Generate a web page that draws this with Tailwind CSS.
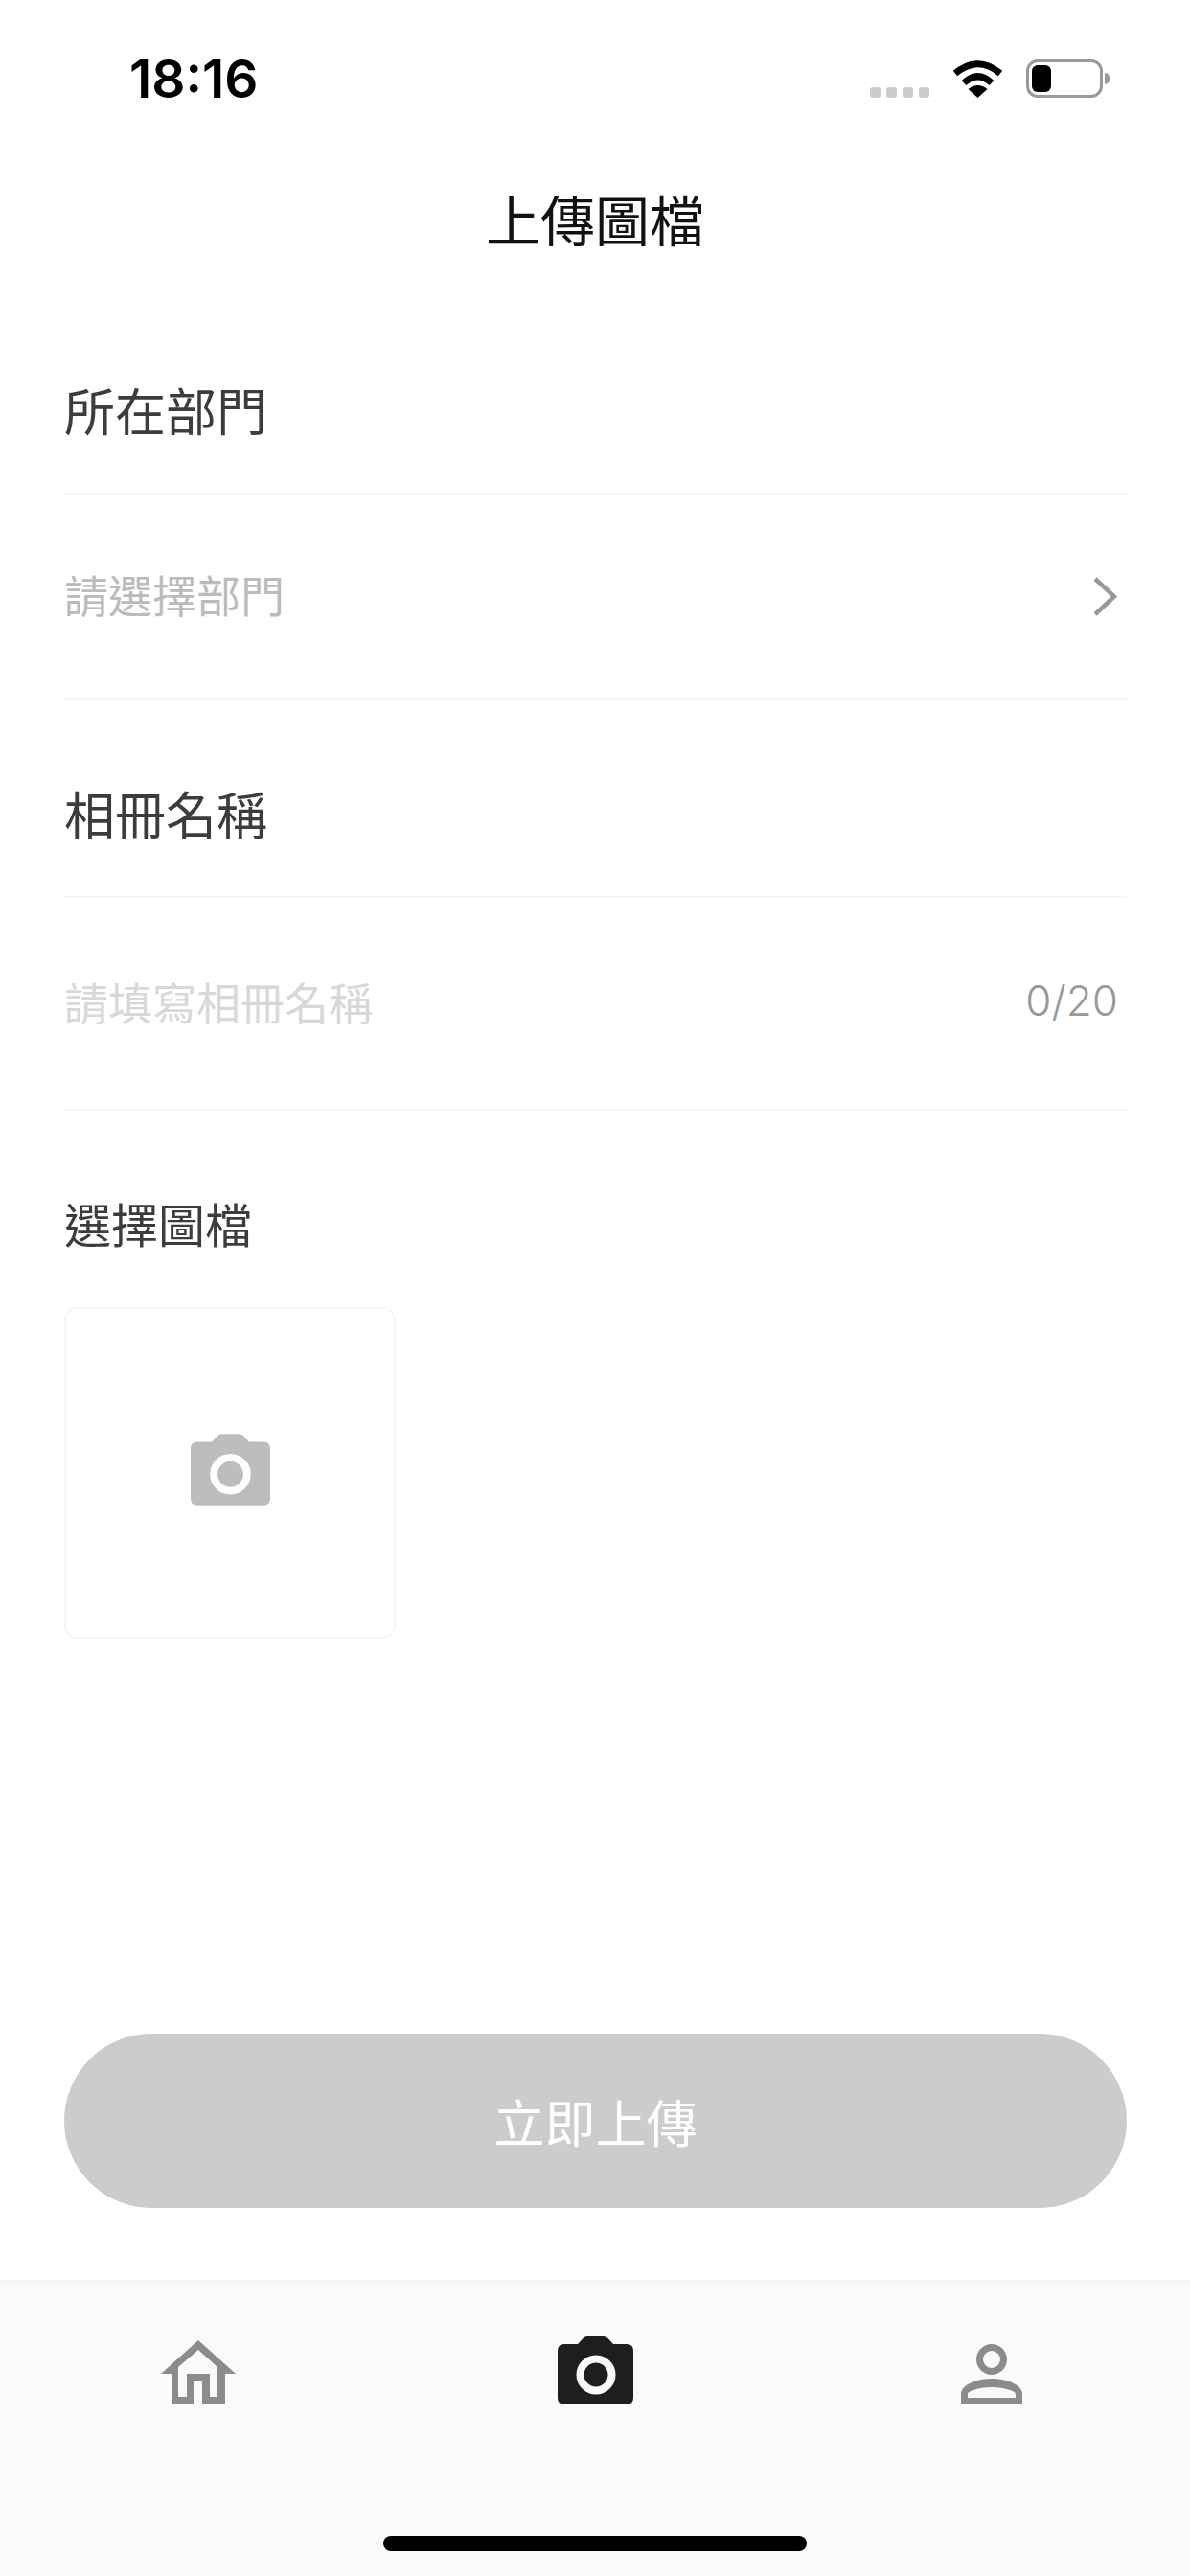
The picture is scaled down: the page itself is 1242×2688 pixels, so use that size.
<!DOCTYPE html>
<html lang="zh-Hant">
  <head>
    <meta charset="UTF-8" />
    <meta name="viewport" content="width=device-width, initial-scale=1.0" />
    <title>上傳圖檔</title>
    <script src="https://cdn.jsdelivr.net/npm/@tailwindcss/browser@4"></script>
  </head>
  <body class="bg-white">
    <div class="w-[1242px] h-[2688px] flex flex-col bg-white font-['Noto_Sans_CJK_TC',sans-serif] font-normal text-[#3c3c3c] overflow-hidden">
      <!-- Status bar -->
      <div class="h-[132px] shrink-0 flex justify-between pl-[135px] pr-[84px]">
        <span class="mt-[50px] h-[64px] text-[55px] leading-[64px] font-semibold text-black font-['Inter',sans-serif]">18:16</span>
        <div class="flex items-start pt-[62px]">
          <div class="flex gap-[6px] mt-[29px]">
            <span class="w-[11px] h-[11px] rounded-[3px] bg-[#cccccc]"></span>
            <span class="w-[11px] h-[11px] rounded-[3px] bg-[#cccccc]"></span>
            <span class="w-[11px] h-[11px] rounded-[3px] bg-[#cccccc]"></span>
            <span class="w-[11px] h-[11px] rounded-[3px] bg-[#cccccc]"></span>
          </div>
          <svg class="ml-[24px] mt-[1px]" width="53" height="39" viewBox="0 0 53 39" fill="none">
            <path d="M3 13.500Q26.500 -6 50 13.500" stroke="#000" stroke-width="7" />
            <path d="M12 23.500Q26.500 10 41 23.500" stroke="#000" stroke-width="7" />
            <path d="M26.500 39L16.500 30Q26.500 22 36.500 30Z" fill="#000" />
          </svg>
          <div class="ml-[24px] flex items-center">
            <div class="w-[80px] h-[40px] border-[3px] border-[#999999] rounded-[12px] p-[3px]">
              <div class="w-[20px] h-full rounded-[6px] bg-black"></div>
            </div>
            <span class="ml-[2px] w-[5px] h-[12px] rounded-r-[5px] bg-[#999999]"></span>
          </div>
        </div>
      </div>

      <!-- Title -->
      <header class="h-[196px] shrink-0 flex items-center justify-center pb-[7px]">
        <h1 class="text-[57px] leading-[70px] font-normal text-[#111111]">上傳圖檔</h1>
      </header>

      <!-- Form -->
      <main class="flex-1 flex flex-col ml-[67px] mr-[66px] mt-[17px]">
        <div class="h-[171px] shrink-0 flex items-center pb-[6px] border-b-2 border-[#f5f5f5] text-[53px] leading-[64px]">所在部門</div>
        <div class="h-[214px] shrink-0 flex items-center justify-between pb-[6px] border-b-2 border-[#f5f5f5] pr-[10px] text-[46px] leading-[60px] text-[#bbbbbb]">
          <span>請選擇部門</span>
          <svg class="mt-[6px]" width="26" height="41" viewBox="0 0 26 41" fill="none">
            <path d="M3 2L23 20.500L3 39" stroke="#999999" stroke-width="4.500" />
          </svg>
        </div>
        <div class="mt-[37px] h-[170px] shrink-0 flex items-center pb-[6px] border-b-2 border-[#f5f5f5] text-[53px] leading-[64px]">相冊名稱</div>
        <div class="h-[222px] shrink-0 flex items-center justify-between pb-[6px] border-b-2 border-[#f5f5f5] pr-[9px] text-[46px] leading-[60px] text-[#d8d8d8]">
          <span>請填寫相冊名稱</span>
          <span class="font-['Inter',sans-serif] font-light text-[44px] text-[#999999]">0/20</span>
        </div>
        <h2 class="mt-[86px] text-[49px] leading-[62px]">選擇圖檔</h2>
        <div class="mt-[57px] w-[346px] h-[346px] flex items-center justify-center rounded-[14px] border-2 border-[#f5f5f5]">
          <svg class="mb-[7px]" width="83" height="75" viewBox="0 0 79 71">
            <path d="M7 8H21L27 1.500Q28.500 0 31 0H48Q50.500 0 52 1.500L58 8H72Q79 8 79 15V64Q79 71 72 71H7Q0 71 0 64V15Q0 8 7 8Z" fill="#bdbdbd" />
            <circle cx="39.500" cy="40" r="16.500" fill="none" stroke="#ffffff" stroke-width="7.500" />
          </svg>
        </div>
        <button class="mt-auto mb-[75px] h-[182px] rounded-full bg-[#cccccc] text-white text-[53px] leading-[64px] font-normal">立即上傳</button>
      </main>

      <!-- Tab bar -->
      <nav class="h-[309px] shrink-0 flex flex-col bg-[#fafafa] border-t-2 border-[#f6f6f6]">
        <div class="grid grid-cols-3 items-end h-[128px]">
          <div class="flex justify-center">
            <svg width="78" height="67" viewBox="0 0 78 67">
              <path fill-rule="evenodd" d="M39 0L78 35H67V67H43V43H34V67H11V35H0ZM39 10L18 28V59H27V35H51V59H59V28Z" fill="#8c8c8c" />
            </svg>
          </div>
          <div class="flex justify-center">
            <svg width="79" height="71" viewBox="0 0 79 71">
              <path d="M7 8H21L27 1.500Q28.500 0 31 0H48Q50.500 0 52 1.500L58 8H72Q79 8 79 15V64Q79 71 72 71H7Q0 71 0 64V15Q0 8 7 8Z" fill="#1e1e1e" />
              <circle cx="40" cy="40" r="16.500" fill="none" stroke="#fafafa" stroke-width="8" />
            </svg>
          </div>
          <div class="flex justify-center">
            <svg width="64" height="63" viewBox="0 0 64 63" fill="#8c8c8c">
              <circle cx="32" cy="16" r="12.500" fill="none" stroke="#8c8c8c" stroke-width="7" />
              <path fill-rule="evenodd" d="M0 63V52C0 43 15 36 32 36C49 36 64 43 64 52V63ZM7 56H57V52C57 49 45 45 32 45C19 45 7 49 7 52Z" />
            </svg>
          </div>
        </div>
        <div class="mt-[137px] mx-auto w-[442px] h-[16px] rounded-full bg-black"></div>
      </nav>
    </div>
  </body>
</html>
